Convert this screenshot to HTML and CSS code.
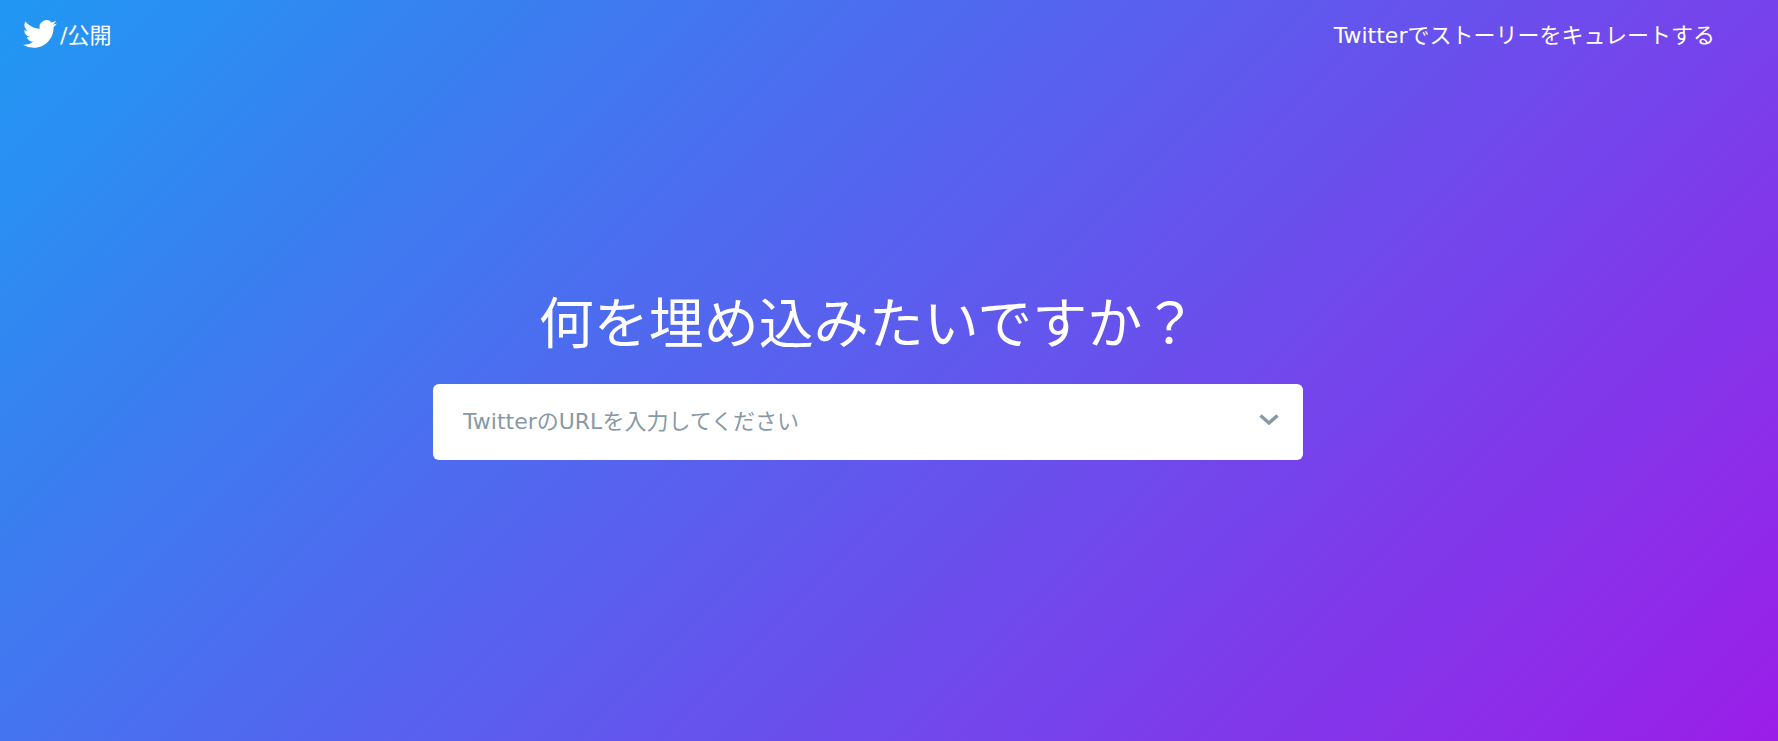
FILE: index.html
```html
<!DOCTYPE html>
<html lang="ja">
<head>
  <meta charset="UTF-8" />
  <meta name="viewport" content="width=device-width, initial-scale=1.0"/>
  <title>Twitter Publish</title>
  <link rel="stylesheet" href="styles.css">
</head>
<body>
  <header>
    <a class="brand" href="#">
      <svg class="bird" viewBox="0 0 24 24"><path d="M23.95 4.57a10 10 0 0 1-2.82.77 4.96 4.96 0 0 0 2.16-2.72c-.95.55-2 .95-3.13 1.18a4.92 4.92 0 0 0-8.38 4.48C7.69 8.09 4.07 6.13 1.64 3.16a4.82 4.82 0 0 0-.67 2.48c0 1.71.87 3.21 2.19 4.1a4.9 4.9 0 0 1-2.23-.62v.06a4.92 4.92 0 0 0 3.95 4.83 5 5 0 0 1-2.21.08 4.94 4.94 0 0 0 4.6 3.42A9.87 9.87 0 0 1 0 19.54a14 14 0 0 0 7.56 2.21c9.05 0 14-7.5 14-13.98 0-.21 0-.42-.02-.63a9.94 9.94 0 0 0 2.41-2.55z"/></svg>
      <span class="brand-name">/公開</span>
    </a>
    <a class="curate" href="#">Twitterでストーリーをキュレートする</a>
  </header>

  <main>
    <h1>何を埋め込みたいですか？</h1>
    <div class="url-box">
      <input type="text" placeholder="TwitterのURLを入力してください" />
      <svg class="chevron" viewBox="0 0 20 11"><path d="M1.5 1.5l8.5 7.5 8.5-7.5"/></svg>
    </div>
  </main>
</body>
</html>
```

FILE: styles.css
```css
* {
  margin: 0;
  padding: 0;
  box-sizing: border-box;
}
body {
  height: 100vh;
  overflow: hidden;
  font-family: "DejaVu Sans", "Noto Sans CJK JP", sans-serif;
  color: #ffffff;
  background: linear-gradient(135deg, #2098f3, #9b1ee8);
}
a {
  color: #ffffff;
  text-decoration: none;
}
header {
  display: flex;
  align-items: center;
  justify-content: space-between;
  height: 66px;
  padding: 0 63px 0 23px;
}
.brand {
  display: flex;
  align-items: center;
  font-size: 22px;
}
.bird {
  width: 34px;
  height: 34px;
  margin-top: 2px;
  fill: #ffffff;
  margin-right: 3px;
}
.curate {
  font-size: 22px;
}

main {
  display: flex;
  flex-direction: column;
  align-items: center;
  padding: 218px 42px 0 0;
}
h1 {
  font-size: 55px;
  font-weight: 400;
  line-height: 80px;
  margin-bottom: 20px;
}
.url-box {
  display: flex;
  align-items: center;
  width: 870px;
  height: 76px;
  padding: 0 24px 2px 30px;
  background-color: #ffffff;
  border-radius: 6px;
}
.url-box input {
  flex: 1;
  border: none;
  outline: none;
  font: inherit;
  font-size: 22px;
  color: #333333;
}
.url-box input::placeholder {
  color: #8899a6;
  opacity: 1;
}
.chevron {
  width: 20px;
  height: 11px;
  margin-bottom: 3px;
  fill: none;
  stroke: #8899a6;
  stroke-width: 3.4;
}
```
